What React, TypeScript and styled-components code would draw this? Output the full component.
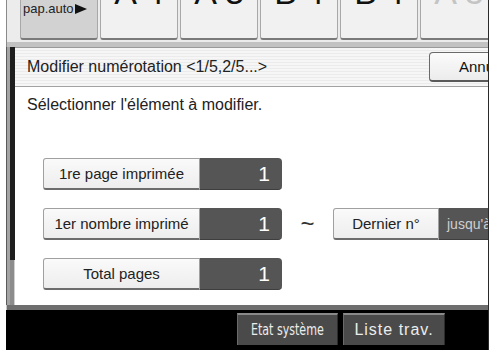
import React from 'react'
import styled, { createGlobalStyle } from 'styled-components'

const GlobalStyle = createGlobalStyle`
  html, body {
    margin: 0;
    padding: 0;
    background: #ffffff;
  }
  body {
    font-family: "Liberation Sans", Arial, sans-serif;
    width: 490px;
    height: 351px;
    overflow: hidden;
  }
`

const Page = styled.div`
  width: 490px;
  height: 351px;
  padding-left: 6px;
  box-sizing: border-box;
  background: #ffffff;
`

const Screen = styled.div`
  width: 482px;
  display: flex;
  flex-direction: column;
  overflow: hidden;
  border-right: 1px solid #2a2a2a;
`

const TabRow = styled.div`
  height: 42px;
  display: flex;
  gap: 2px;
  padding-left: 13px;
  background: #ececec;
  border-left: 1px solid #8a8a8a;
  box-sizing: border-box;
`

const Tab = styled.div<{ $active?: boolean }>`
  flex: 0 0 78px;
  height: 40px;
  box-sizing: border-box;
  background: ${p => (p.$active ? '#d2d2d2' : '#f1f1f1')};
  border: 1px solid #a8a8a8;
  border-top: none;
  border-bottom: 2px solid #7a7a7a;
  border-radius: 0 0 3px 3px;
  overflow: hidden;
  display: flex;
  justify-content: center;
`

const PaperTabLabel = styled.div`
  align-self: flex-start;
  width: 100%;
  padding: 2px 0 0 2px;
  font-size: 13px;
  line-height: 14px;
  color: #222;
  display: flex;
  align-items: center;
  gap: 1px;
`

const BigSize = styled.div<{ $faint?: boolean }>`
  margin-top: -25px;
  font-size: 34px;
  line-height: 34px;
  letter-spacing: 8px;
  padding-left: 8px;
  color: ${p => (p.$faint ? '#c4c4c4' : '#111')};
`

const Gap = styled.div`
  height: 5px;
  background: #c2c2c2;
  border-left: 1px solid #8a8a8a;
`

const Frame = styled.div`
  display: flex;
  height: 258px;
`

const Rail = styled.div`
  width: 9px;
  display: flex;
  box-sizing: border-box;
  border-left: 1px solid #5a5a5a;
  background: #a4a4a4;
`

const RailTrack = styled.div`
  margin-left: 3px;
  width: 5px;
  display: flex;
  flex-direction: column;
`

const RailThumb = styled.div`
  height: 213px;
  background: #1e1e1e;
`

const RailRest = styled.div`
  flex: 1;
  background: #8c8c8c;
  border-right: 1px solid #d0d0d0;
`

const Main = styled.div`
  flex: 1;
  display: flex;
  flex-direction: column;
  min-width: 0;
`

const TitleBar = styled.div`
  height: 40px;
  box-sizing: border-box;
  display: flex;
  align-items: center;
  justify-content: space-between;
  padding-left: 12px;
  border-top: 1px solid #9a9a9a;
  border-bottom: 1px solid #a2a2a2;
  background: repeating-linear-gradient(
    to bottom,
    #f6f6f6 0px,
    #f6f6f6 2px,
    #ebebeb 2px,
    #ebebeb 3px
  );
`

const Title = styled.div`
  font-size: 16px;
  color: #222;
  white-space: nowrap;
`

const CancelButton = styled.div`
  flex: 0 0 80px;
  height: 30px;
  box-sizing: border-box;
  margin-right: -21px;
  border: 1px solid #6a6a6a;
  border-bottom: 2px solid #5a5a5a;
  border-radius: 4px;
  background: linear-gradient(#fbfbfb, #ececec);
  font-size: 15px;
  color: #111;
  display: flex;
  align-items: center;
  padding-left: 29px;
  white-space: nowrap;
  overflow: hidden;
`

const Content = styled.div`
  flex: 1;
  background: #ffffff;
  padding: 9px 0 0 12px;
  display: flex;
  flex-direction: column;
`

const Prompt = styled.div`
  font-size: 16px;
  line-height: 18px;
  color: #222;
  margin-bottom: 44px;
`

const Rows = styled.div`
  padding-left: 16px;
  display: flex;
  flex-direction: column;
  gap: 18px;
`

const Row = styled.div`
  display: flex;
  align-items: center;
  height: 32px;
`

const LabelButton = styled.div<{ $width: number }>`
  flex: 0 0 ${p => p.$width}px;
  height: 32px;
  box-sizing: border-box;
  border: 1px solid #a0a0a0;
  border-bottom: 2px solid #6c6c6c;
  border-radius: 3px 0 0 3px;
  background: linear-gradient(#fafafa, #ededed);
  font-size: 15px;
  color: #222;
  display: flex;
  align-items: center;
  justify-content: center;
  white-space: nowrap;
`

const ValueBox = styled.div<{ $width: number; $small?: boolean }>`
  flex: 0 0 ${p => p.$width}px;
  height: 32px;
  box-sizing: border-box;
  background: #555555;
  border-radius: 0 4px 4px 0;
  border-bottom: 1px solid #3e3e3e;
  color: ${p => (p.$small ? '#cfcfcf' : '#ffffff')};
  font-size: ${p => (p.$small ? '14px' : '21px')};
  display: flex;
  align-items: center;
  justify-content: ${p => (p.$small ? 'flex-start' : 'flex-end')};
  padding: ${p => (p.$small ? '0 0 0 8px' : '0 12px 0 0')};
  white-space: nowrap;
  overflow: hidden;
`

const Tilde = styled.div`
  flex: 0 0 51px;
  text-align: center;
  font-size: 24px;
  line-height: 32px;
  color: #333;
`

const Sep = styled.div`
  height: 5px;
  background: #6e6e6e;
  border-left: 1px solid #c8c8c8;
`

const Footer = styled.div`
  height: 37px;
  background: #000000;
  display: flex;
  align-items: flex-start;
  padding: 3px 0 0 231px;
  gap: 5px;
`

const FooterButton = styled.div<{ $width: number }>`
  flex: 0 0 ${p => p.$width}px;
  height: 32px;
  box-sizing: border-box;
  background: #4a4a4a;
  border-top: 2px solid #8a8a8a;
  border-left: 1px solid #6a6a6a;
  border-right: 1px solid #2c2c2c;
  color: #ececec;
  font-size: 16px;
  letter-spacing: 1px;
  display: flex;
  align-items: center;
  justify-content: center;
  white-space: nowrap;
`

const CondensedText = styled.span`
  font-family: "DejaVu Sans Condensed", "DejaVu Sans", sans-serif;
  font-size: 15px;
  letter-spacing: 0;
  transform: scaleX(0.82);
  display: inline-block;
`

const sizes = ['A4', 'A3', 'B4', 'B4']

const App = () => (
  <>
    <GlobalStyle />
    <Page>
      <Screen>
        <TabRow>
          <Tab $active>
            <PaperTabLabel>
              pap.auto
              <svg width="12" height="10" viewBox="0 0 12 10">
                <polygon points="0,0 12,5 0,10" fill="#111" />
              </svg>
            </PaperTabLabel>
          </Tab>
          {sizes.map((s, i) => (
            <Tab key={i}>
              <BigSize>{s}</BigSize>
            </Tab>
          ))}
          <Tab>
            <BigSize $faint>A5</BigSize>
          </Tab>
        </TabRow>
        <Gap />
        <Frame>
          <Rail>
            <RailTrack>
              <RailThumb />
              <RailRest />
            </RailTrack>
          </Rail>
          <Main>
            <TitleBar>
              <Title>Modifier numérotation &lt;1/5,2/5...&gt;</Title>
              <CancelButton>Annuler</CancelButton>
            </TitleBar>
            <Content>
              <Prompt>Sélectionner l'élément à modifier.</Prompt>
              <Rows>
                <Row>
                  <LabelButton $width={157}>1re page imprimée</LabelButton>
                  <ValueBox $width={82}>1</ValueBox>
                </Row>
                <Row>
                  <LabelButton $width={157}>1er nombre imprimé</LabelButton>
                  <ValueBox $width={82}>1</ValueBox>
                  <Tilde>~</Tilde>
                  <LabelButton $width={106}>Dernier n°</LabelButton>
                  <ValueBox $width={60} $small>jusqu'à la fin</ValueBox>
                </Row>
                <Row>
                  <LabelButton $width={157}>Total pages</LabelButton>
                  <ValueBox $width={82}>1</ValueBox>
                </Row>
              </Rows>
            </Content>
          </Main>
        </Frame>
        <Sep />
        <Footer>
          <FooterButton $width={101}>
            <CondensedText>Etat système</CondensedText>
          </FooterButton>
          <FooterButton $width={102}>Liste trav.</FooterButton>
        </Footer>
      </Screen>
    </Page>
  </>
)

export default App
